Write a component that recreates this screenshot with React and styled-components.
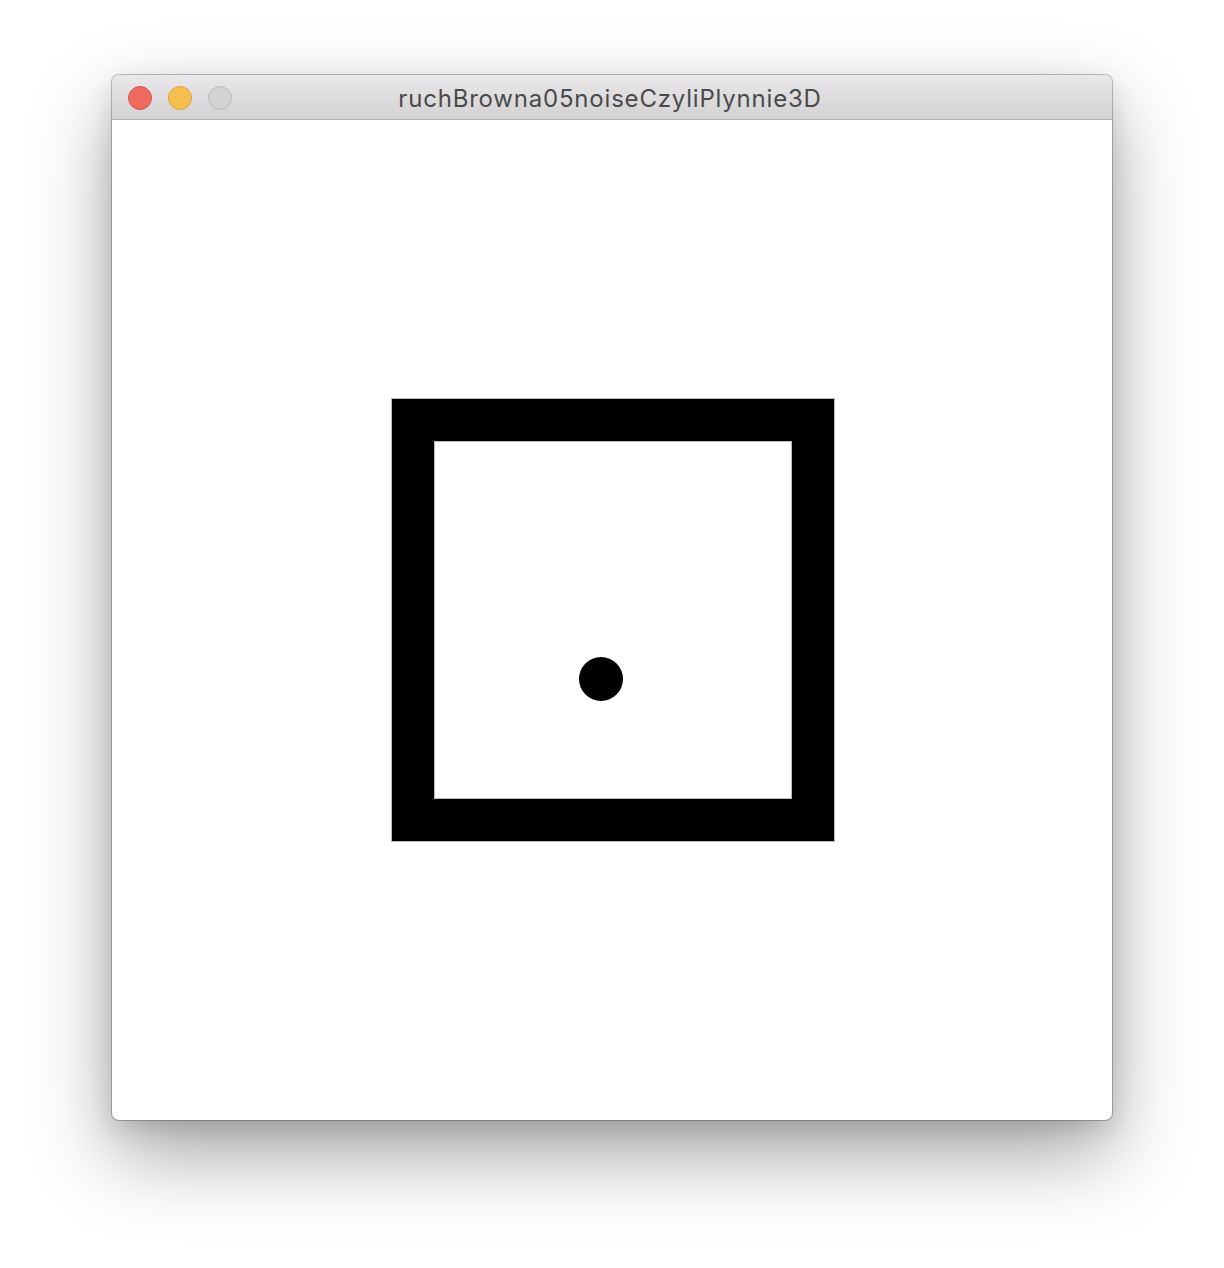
import React from "react";
import styled, { createGlobalStyle } from "styled-components";

const GlobalStyle = createGlobalStyle`
  html, body {
    margin: 0;
    padding: 0;
    background: #ffffff;
  }
`;

const Page = styled.div`
  width: 1224px;
  height: 1268px;
  padding: 75px 0 0 112px;
  box-sizing: border-box;
`;

const Window = styled.div`
  width: 1000px;
  border-radius: 7px;
  overflow: hidden;
  background: #ffffff;
  box-shadow: 0 0 0 1px rgba(0, 0, 0, 0.24), 0 34px 80px rgba(0, 0, 0, 0.36),
    0 8px 24px rgba(0, 0, 0, 0.12);
`;

const TitleBar = styled.div`
  height: 45px;
  box-sizing: border-box;
  display: grid;
  grid-template-columns: 1fr auto 1fr;
  align-items: center;
  padding: 1px 16px 0;
  background: linear-gradient(#e9e7e9, #d3d2d3);
  border-bottom: 1px solid #b2b2b2;
`;

const Lights = styled.div`
  display: flex;
  gap: 16px;
`;

const Light = styled.span`
  width: 24px;
  height: 24px;
  box-sizing: border-box;
  border-radius: 50%;
  background: ${(p) => p.fill};
  border: 1px solid ${(p) => p.edge};
`;

const Title = styled.div`
  font-family: Inter, "Open Sans", "Liberation Sans", sans-serif;
  font-size: 24px;
  letter-spacing: 0.8px;
  color: #4a4a4a;
  white-space: nowrap;
  margin: 2px 0 0 -4px;
`;

const Canvas = styled.div`
  height: 1000px;
  display: flex;
  align-items: center;
  justify-content: center;
`;

const Frame = styled.div`
  width: 444px;
  height: 444px;
  box-sizing: border-box;
  padding: 42px;
  background: #000000;
  border: 1px solid #b8b8b8;
  margin: 0 0 0 2px;
`;

const Hole = styled.div`
  position: relative;
  width: 100%;
  height: 100%;
  box-sizing: border-box;
  background: #ffffff;
  border: 1px solid #b8b8b8;
`;

const Dot = styled.div`
  position: absolute;
  width: 44px;
  height: 44px;
  border-radius: 50%;
  background: #000000;
`;

function App() {
  const dot = { x: 144, y: 215 };

  return (
    <Page>
      <GlobalStyle />
      <Window>
        <TitleBar>
          <Lights>
            <Light fill="#ee6a5f" edge="#d45548" />
            <Light fill="#f6be4f" edge="#d9a33f" />
            <Light fill="#d3d3d3" edge="#bbbbbb" />
          </Lights>
          <Title>ruchBrowna05noiseCzyliPlynnie3D</Title>
          <div />
        </TitleBar>
        <Canvas>
          <Frame>
            <Hole>
              <Dot style={{ left: dot.x, top: dot.y }} />
            </Hole>
          </Frame>
        </Canvas>
      </Window>
    </Page>
  );
}

export default App;
